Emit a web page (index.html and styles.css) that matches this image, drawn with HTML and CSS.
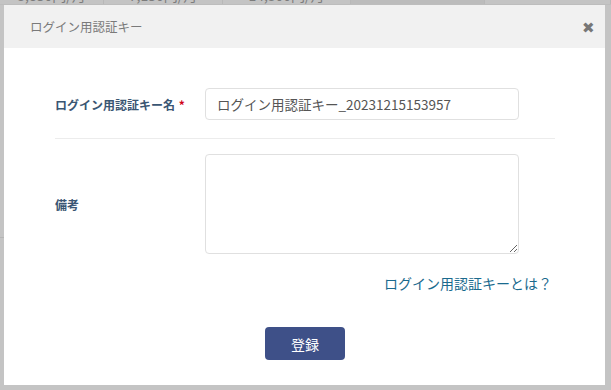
FILE: index.html
```html
<!DOCTYPE html>
<html lang="ja">
<head>
    <meta charset="UTF-8">
    <title>ログイン用認証キー</title>
    <link rel="stylesheet" href="styles.css">
</head>
<body>
<div class="backdrop">
    <div class="price_row">
        <div class="cell c1">3,850円/月</div>
        <div class="cell c2">7,150円/月</div>
        <div class="cell c3">14,300円/月</div>
        <div class="cell c4 dark"></div>
        <div class="cell"></div>
    </div>
    <div class="bg_line"></div>
</div>

<div class="modal">
    <div class="modal_head">
        <span class="modal_title">ログイン用認証キー</span>
        <span class="modal_close">&#x2716;</span>
    </div>
    <form class="modal_body" id="keyForm">
        <div class="form_row first">
            <label for="keyName">ログイン用認証キー名 <em class="req">*</em></label>
            <input id="keyName" type="text" name="keyName" value="ログイン用認証キー_20231215153957"/>
        </div>
        <div class="form_row">
            <label for="memo">備考</label>
            <textarea id="memo" name="memo"></textarea>
        </div>
        <div class="help_row">
            <a href="#" class="help_link">ログイン用認証キーとは？</a>
        </div>
        <div class="btn_row">
            <button type="submit" class="regist_btn">登録</button>
        </div>
    </form>
</div>
</body>
</html>
```

FILE: styles.css
```css
* {
    box-sizing: border-box;
}

body {
    margin: 0;
    height: 390px;
    overflow: hidden;
    background-color: #c4c4c4;
    font-family: "Noto Sans CJK JP", "Noto Sans", sans-serif;
}

/* page behind the dialog */
.backdrop {
    height: 390px;
}

.price_row {
    display: flex;
    height: 5px;
    overflow: hidden;
    border-bottom: 1px solid #bdbdbd;
}

.cell {
    flex: 1;
    margin-top: -14px;
    height: 19px;
    line-height: 19px;
    text-align: center;
    font-size: 14px;
    color: #7c7c7c;
    border-right: 1px solid #b8b8b8;
}

.c1 { flex: 0 0 104px; }
.c2 { flex: 0 0 119px; }
.c3 { flex: 0 0 128px; }
.c4 { flex: 0 0 134px; }

.dark {
    background-color: #bcbcbc;
}

.bg_line {
    margin-top: 232px;
    height: 1px;
    width: 4px;
    background-color: #b5b5b5;
}

/* dialog */
.modal {
    position: absolute;
    top: 5px;
    left: 4px;
    width: 601px;
    height: 380px;
    background-color: #fff;
}

.modal_head {
    height: 43px;
    display: flex;
    align-items: center;
    justify-content: space-between;
    padding: 0 10px 0 26px;
    background-color: #f1f1f1;
}

.modal_title {
    font-size: 12.5px;
    color: #7a7a7a;
}

.modal_close {
    font-size: 15px;
    color: #777;
}

.modal_body {
    padding: 40px 50px 0 51px;
}

.form_row {
    display: grid;
    grid-template-columns: 150px 314px;
    align-items: center;
}

.form_row.first {
    padding-bottom: 18px;
    margin-bottom: 15px;
    border-bottom: 1px solid #ececec;
}

.form_row label {
    font-size: 12px;
    font-weight: bold;
    color: #3a5673;
}

.req {
    font-style: normal;
    color: #d0021b;
    margin-left: 1px;
}

.form_row input,
.form_row textarea {
    width: 314px;
    border: 1px solid #e0e0e0;
    border-radius: 4px;
    font-family: inherit;
    color: #555;
    background-color: #fff;
}

.form_row input {
    height: 32px;
    padding: 0 11px;
    font-size: 13.5px;
}

.form_row textarea {
    height: 100px;
    display: block;
}

.help_row {
    margin-top: 18px;
    padding-right: 3px;
    text-align: right;
    line-height: 20px;
}

.help_link {
    font-size: 14px;
    color: #1a6a8e;
    text-decoration: none;
}

.btn_row {
    margin-top: 34px;
    text-align: center;
}

.regist_btn {
    width: 80px;
    height: 33px;
    border: none;
    border-radius: 4px;
    background-color: #3e5088;
    color: #fff;
    font-family: inherit;
    font-size: 14px;
    cursor: pointer;
}
```
